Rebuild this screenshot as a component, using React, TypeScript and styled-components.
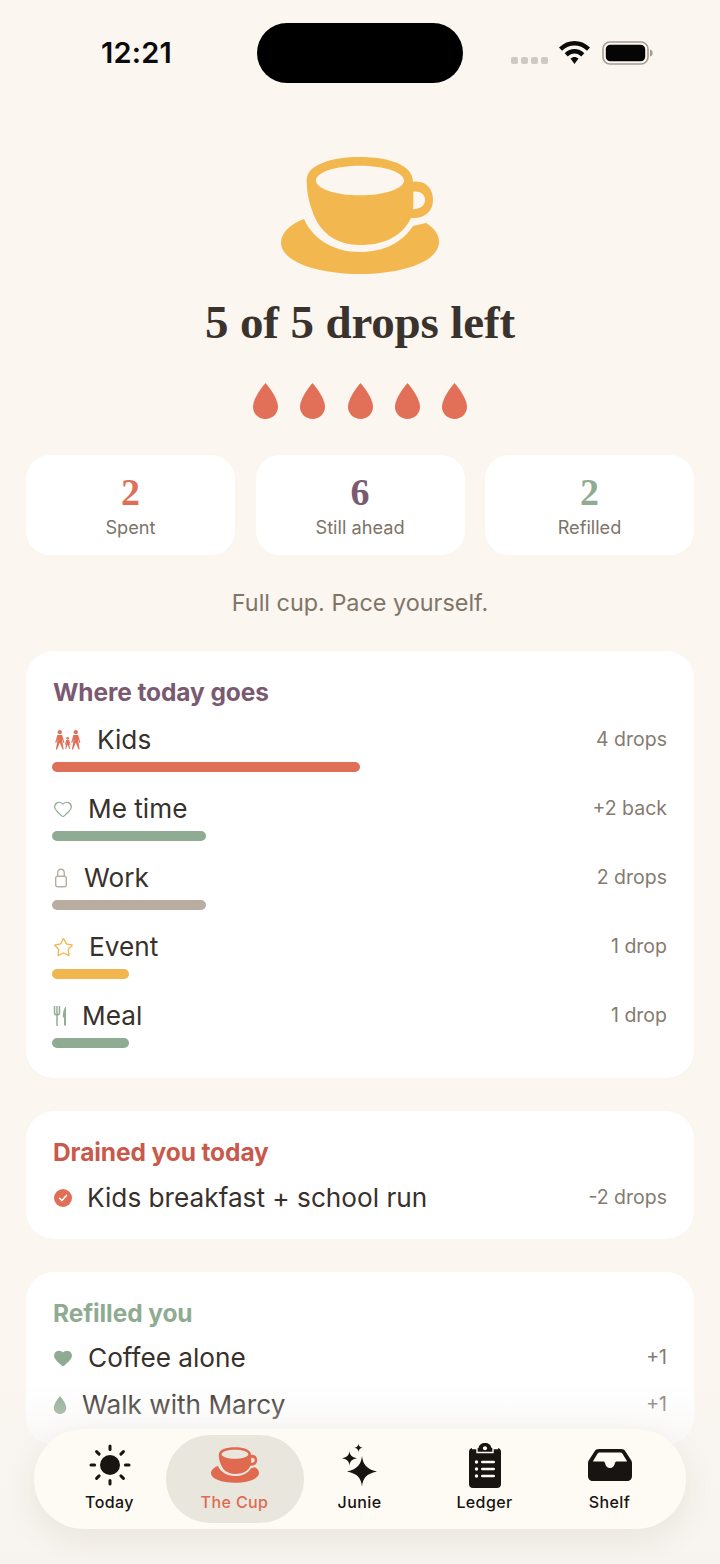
import styled, { createGlobalStyle } from 'styled-components';
import { Heart, Star } from 'lucide-react';

const GlobalStyle = createGlobalStyle`
  html, body {
    margin: 0;
    padding: 0;
    background: #fbf6ef;
    font-family: Inter, "Liberation Sans", sans-serif;
  }
  * { box-sizing: border-box; }
`;

const Page = styled.div`
  position: relative;
  width: 720px;
  height: 1564px;
  overflow: hidden;
  padding: 0 26px;
  background: #fbf6ef;
  color: #38312b;
`;

const StatusBar = styled.div`
  display: flex;
  align-items: center;
  height: 60px;
  margin-top: 23px;
`;

const Clock = styled.div`
  width: 231px;
  padding: 0 0 0 75px;
  font-size: 29px;
  font-weight: 600;
  letter-spacing: 0.2px;
  color: #0b0b0b;
  margin-top: -1px;
`;

const Island = styled.div`
  width: 206px;
  height: 60px;
  border-radius: 30px;
  background: #000;
`;

const StatusIcons = styled.div`
  display: flex;
  align-items: center;
  margin-left: 48px;
  margin-top: -1px;
`;

const SignalDots = styled.div`
  display: flex;
  gap: 3px;
  margin: 15px 11px 0 0;
`;

const SignalDot = styled.span`
  width: 7px;
  height: 7px;
  border-radius: 2px;
  background: #cdc9c3;
`;

const Battery = styled.svg`
  margin-left: 12px;
`;

const Hero = styled.div`
  display: flex;
  flex-direction: column;
  align-items: center;
  margin-top: 74px;
`;

const Title = styled.h1`
  margin: 24px 0 0;
  font-family: "Liberation Serif", serif;
  font-size: 47px;
  line-height: 48px;
  font-weight: 700;
  letter-spacing: -0.15px;
  color: #3a322c;
`;

const DropRow = styled.div`
  display: flex;
  gap: 22.4px;
  margin-top: 37px;
`;

const Stats = styled.div`
  display: grid;
  grid-template-columns: repeat(3, 209px);
  justify-content: space-between;
  margin-top: 36px;
`;

const StatCard = styled.div`
  display: flex;
  flex-direction: column;
  align-items: center;
  height: 100px;
  padding-top: 15px;
  border-radius: 24px;
  background: #fff;
`;

const StatValue = styled.div<{ $color: string }>`
  font-family: "Liberation Serif", serif;
  font-size: 38px;
  line-height: 44px;
  font-weight: 700;
  color: ${({ $color }) => $color};
`;

const StatLabel = styled.div`
  font-size: 18.2px;
  line-height: 24px;
  margin-top: 1px;
  color: #7d7368;
`;

const Tagline = styled.p`
  margin: 34px 0 0;
  text-align: center;
  font-size: 23.4px;
  line-height: 28px;
  color: #7f7568;
`;

const Card = styled.section<{ $gap: number; $bottom: number }>`
  margin-top: 33px;
  padding: 26px 27px ${({ $bottom }) => $bottom}px;
  border-radius: 28px;
  background: #fff;
  display: flex;
  flex-direction: column;
  gap: ${({ $gap }) => $gap}px;

  ${Tagline} + & {
    margin-top: 34px;
  }
`;

const CardTitle = styled.h2<{ $color: string }>`
  margin: 0;
  font-size: 24.5px;
  line-height: 30px;
  font-weight: 700;
  letter-spacing: -0.1px;
  color: ${({ $color }) => $color};
`;

const Rows = styled.div<{ $gap: number }>`
  display: flex;
  flex-direction: column;
  gap: ${({ $gap }) => $gap}px;
`;

const Row = styled.div`
  display: flex;
  align-items: center;
  justify-content: space-between;
  height: 36px;
`;

const RowLabel = styled.div`
  display: flex;
  align-items: center;
  gap: 15px;
  font-size: 26.2px;
  line-height: 34px;
  color: #38312b;
`;

const RowValue = styled.div`
  margin-top: -2px;
  font-size: 19.5px;
  color: #857b70;
`;

const BarRow = styled.div`
  display: flex;
  flex-direction: column;
  gap: 4px;
`;

const Bar = styled.div<{ $color: string }>`
  height: 10px;
  margin-left: -1px;
  border-radius: 5px;
  background: ${({ $color }) => $color};
`;

const IconSlot = styled.span`
  display: flex;
  align-items: center;
`;

const Fade = styled.div`
  position: absolute;
  left: 0;
  right: 0;
  bottom: 0;
  height: 180px;
  background: linear-gradient(to bottom, rgba(248, 245, 242, 0), rgba(246, 243, 241, 0.42) 24%, rgba(247, 243, 238, 0.85) 100%);
  pointer-events: none;
`;

const TabBar = styled.nav`
  position: absolute;
  left: 34px;
  right: 34px;
  bottom: 35px;
  height: 100px;
  padding: 0 13px;
  display: flex;
  align-items: center;
  border-radius: 50px;
  background: #fefbf4;
  box-shadow: 0 10px 34px rgba(70, 50, 30, 0.08);
`;

const Tab = styled.div<{ $active?: boolean }>`
  flex: ${({ $active }) => ($active ? '0 0 138px' : '0 0 125px')};
  margin: ${({ $active }) => ($active ? '0 -6.5px' : '0')};
  height: 88px;
  display: flex;
  flex-direction: column;
  align-items: center;
  padding-top: 7px;
  border-radius: 44px;
  background: ${({ $active }) => ($active ? '#e9e6dd' : 'transparent')};
  color: ${({ $active }) => ($active ? '#df6a4f' : '#171411')};
`;

const TabIcon = styled.div`
  height: 46px;
  display: flex;
  align-items: center;
  justify-content: center;
`;

const TabLabel = styled.div`
  margin-top: 4px;
  font-size: 16px;
  line-height: 20px;
  font-weight: 500;
  letter-spacing: 0.4px;
`;

const CUP_BODY =
  'M25.7 23C25.7 8 50 0 79 0C108 0 132 8 132 24.7C146 23 152 33 152 43C152 54 144 62 130 61C121 80 102 88 79 88C56 88 38 76 31 53C27 42 25.7 33 25.7 23ZM79 8.7C54.7 8.7 35 15.3 35 23.5C35 31.7 54.7 38.3 79 38.3C103.3 38.3 123 31.7 123 23.5C123 15.3 103.3 8.7 79 8.7ZM132.3 34.7C132.5 40 132.5 46 132 52.3C139 52 144 49 144 43C144 37 139 34 132.3 34.7Z';
const CUP_SAUCER =
  'M23 62C9 67 0 76 0 86C0 104 35 117 79 117C123 117 158 104 158 85C158 77 153 71 145 66L132 69C121 86 102 95 79 95C52 95 32 82 23 62Z';
const DROP = 'M12.5 0C15 3 25 15 25 24C25 31 19 36 12.5 36C6 36 0 31 0 24C0 15 10 3 12.5 0Z';

function CupIcon({ width, height, color }: { width: number; height: number; color: string }) {
  return (
    <svg width={width} height={height} viewBox="0 0 158 117" fill={color}>
      <path d={CUP_BODY} fillRule="evenodd" />
      <path d={CUP_SAUCER} />
    </svg>
  );
}

function DropIcon({ width, height, color }: { width: number; height: number; color: string }) {
  return (
    <svg width={width} height={height} viewBox="0 0 25 36" fill={color}>
      <path d={DROP} />
    </svg>
  );
}

function KidsIcon() {
  const person = (x: number, y: number, s: number) => (
    <g transform={`translate(${x} ${y}) scale(${s})`}>
      <circle cx="0" cy="2.2" r="2.1" />
      <path d="M-2.4 5H2.4L4.6 12.5L3.6 13L2 8.5L3.9 19.5H2.7L0 12.5L-2.7 19.5H-3.9L-2 8.5L-3.6 13L-4.6 12.5Z" />
    </g>
  );
  return (
    <svg width="29" height="20" viewBox="0 0 29 20" fill="#e06f58">
      {person(6.8, 0, 1)}
      {person(14.7, 7, 0.62)}
      {person(22.8, 0, 1)}
    </svg>
  );
}

function LockIcon() {
  return (
    <svg width="16" height="20" viewBox="0 0 16 20" fill="none" stroke="#b8ada0" strokeWidth="1.4">
      <rect x="2.7" y="8.2" width="10.6" height="10.6" rx="2" />
      <path d="M4.7 8V5.2C4.7 3 6 1.2 8 1.2C10 1.2 11.3 3 11.3 5.2V8" />
    </svg>
  );
}

function MealIcon() {
  return (
    <svg width="14" height="20" viewBox="0 0 14 20" fill="none">
      <path d="M1.5 0.5V6.5C1.5 8 2.4 9 4 9C5.6 9 6.5 8 6.5 6.5V0.5M4 0.5V19.5" stroke="#93ad96" strokeWidth="1.5" strokeLinecap="round" />
      <path d="M13 0.5C10.5 2.5 9.8 7 9.8 11.5H11V19.5H13Z" fill="#93ad96" />
    </svg>
  );
}

function CheckIcon() {
  return (
    <svg width="19" height="18" viewBox="-1 0 19 18">
      <circle cx="9" cy="9" r="9" fill="#e06f58" />
      <path d="M5.6 9.3L8 11.6L12.4 6.4" fill="none" stroke="#fff" strokeWidth="1.5" strokeLinecap="round" strokeLinejoin="round" />
    </svg>
  );
}

function SunIcon() {
  const rays = [0, 45, 90, 135, 180, 225, 270, 315];
  return (
    <svg width="42" height="42" viewBox="0 0 42 42" fill="currentColor">
      <circle cx="21" cy="21" r="10" />
      {rays.map((angle) => (
        <rect key={angle} x="19.5" y="0.5" width="3" height="6.6" rx="1.5" transform={`rotate(${angle} 21 21)`} />
      ))}
    </svg>
  );
}

function SparklesIcon() {
  return (
    <svg width="36" height="44" viewBox="0 0 36 44" fill="currentColor">
      <path d="M20 13C21 21 24 26 35 28.5C24 31 21 35 20 43.5C19 35 16 31 5 28.5C16 26 19 21 20 13Z" />
      <path d="M7.5 8C8 12 9.5 14 15 15.2C9.5 16.4 8 18.4 7.5 22.4C7 18.4 5.5 16.4 0 15.2C5.5 14 7 12 7.5 8Z" />
      <path d="M16.5 0.5C16.8 3 17.6 4.2 20.6 4.8C17.6 5.4 16.8 6.6 16.5 9.2C16.2 6.6 15.4 5.4 12.4 4.8C15.4 4.2 16.2 3 16.5 0.5Z" />
    </svg>
  );
}

function ClipboardIcon() {
  return (
    <svg width="32" height="45" viewBox="0 0 32 45">
      <path
        fill="currentColor"
        fillRule="evenodd"
        d="M4 5H9.5C10 2 12.5 0 16 0C19.5 0 22 2 22.5 5H28C30.5 5 32 6.5 32 9V41C32 43.5 30.5 45 28 45H4C1.5 45 0 43.5 0 41V9C0 6.5 1.5 5 4 5ZM16 3.2C14.8 3.2 13.9 4.1 13.9 5.2C13.9 6.3 14.8 7.2 16 7.2C17.2 7.2 18.1 6.3 18.1 5.2C18.1 4.1 17.2 3.2 16 3.2Z"
      />
      <path d="M3 5.5H8V9.5H24V5.5H29" fill="none" stroke="#fefbf4" strokeWidth="1.4" />
      <g fill="#fefbf4">
        <circle cx="7.5" cy="19" r="1.7" />
        <circle cx="7.5" cy="26" r="1.7" />
        <circle cx="7.5" cy="33" r="1.7" />
        <rect x="12" y="17.8" width="14" height="2.4" rx="1.2" />
        <rect x="12" y="24.8" width="14" height="2.4" rx="1.2" />
        <rect x="12" y="31.8" width="14" height="2.4" rx="1.2" />
      </g>
    </svg>
  );
}

function TrayIcon() {
  return (
    <svg width="44" height="32" viewBox="0 0 44 32" fill="currentColor">
      <path
        fillRule="evenodd"
        d="M11 0H33C35 0 36.5 0.8 37.5 2.4L43 11C43.7 12 44 13 44 14.5V27C44 30 42 32 39 32H5C2 32 0 30 0 27V14.5C0 13 0.3 12 1 11L6.5 2.4C7.5 0.8 9 0 11 0ZM11.5 3.6C10.6 3.6 10 4 9.5 4.7L4.8 12.4H15C16.2 12.4 16.8 13 17.1 14.2C17.7 17 19.5 19 22 19C24.5 19 26.3 17 26.9 14.2C27.2 13 27.8 12.4 29 12.4H39.2L34.5 4.7C34 4 33.4 3.6 32.5 3.6Z"
      />
    </svg>
  );
}

const stats = [
  { value: '2', label: 'Spent', color: '#e06f58' },
  { value: '6', label: 'Still ahead', color: '#7a5a70' },
  { value: '2', label: 'Refilled', color: '#8fab92' },
];

const plan = [
  { label: 'Kids', value: '4 drops', units: 4, color: '#e06f58', icon: <KidsIcon /> },
  { label: 'Me time', value: '+2 back', units: 2, color: '#8fab92', icon: <Heart size={20} color="#8fab92" strokeWidth={1.4} /> },
  { label: 'Work', value: '2 drops', units: 2, color: '#b8ada0', icon: <LockIcon /> },
  { label: 'Event', value: '1 drop', units: 1, color: '#f2b64f', icon: <Star size={21} color="#f2b64f" strokeWidth={1.5} /> },
  { label: 'Meal', value: '1 drop', units: 1, color: '#8fab92', icon: <MealIcon /> },
];

const tabs = [
  { label: 'Today', icon: <SunIcon /> },
  { label: 'The Cup', active: true, icon: <CupIcon width={48} height={36} color="#df6a4f" /> },
  { label: 'Junie', icon: <SparklesIcon /> },
  { label: 'Ledger', icon: <ClipboardIcon /> },
  { label: 'Shelf', icon: <TrayIcon /> },
];

export default function App() {
  return (
    <Page>
      <GlobalStyle />
      <StatusBar>
        <Clock>12:21</Clock>
        <Island />
        <StatusIcons>
          <SignalDots>
            {[0, 1, 2, 3].map((dot) => (
              <SignalDot key={dot} />
            ))}
          </SignalDots>
          <svg width="31" height="23" viewBox="0 0 31 23" fill="#0b0b0b">
            <path d="M15.5 0C21 0 26.5 2.2 31 6.4L28 9.8C24.5 6.4 20 4.6 15.5 4.6C11 4.6 6.5 6.4 3 9.8L0 6.4C4.5 2.2 10 0 15.5 0Z" />
            <path d="M15.5 8C19 8 22.4 9.4 25.3 12.2L22.2 15.5C20.3 13.6 18 12.6 15.5 12.6C13 12.6 10.7 13.6 8.8 15.5L5.7 12.2C8.6 9.4 12 8 15.5 8Z" />
            <path d="M15.5 16C17 16 18.3 16.5 19.5 17.6L15.5 23L11.5 17.6C12.7 16.5 14 16 15.5 16Z" />
          </svg>
          <Battery width="51" height="24" viewBox="0 0 51 24">
            <rect x="1" y="1" width="45" height="22" rx="7" fill="none" stroke="#a39d94" strokeWidth="1.6" />
            <rect x="3.8" y="3.8" width="39.4" height="16.4" rx="4.5" fill="#050505" />
            <path d="M48 8.5C50 9 50.6 10.4 50.6 12C50.6 13.6 50 15 48 15.5Z" fill="#a39d94" />
          </Battery>
        </StatusIcons>
      </StatusBar>

      <Hero>
        <CupIcon width={158} height={117} color="#f2b84f" />
        <Title>5 of 5 drops left</Title>
        <DropRow>
          {[0, 1, 2, 3, 4].map((drop) => (
            <DropIcon key={drop} width={25} height={36} color="#e27059" />
          ))}
        </DropRow>
      </Hero>

      <Stats>
        {stats.map((stat) => (
          <StatCard key={stat.label}>
            <StatValue $color={stat.color}>{stat.value}</StatValue>
            <StatLabel>{stat.label}</StatLabel>
          </StatCard>
        ))}
      </Stats>

      <Tagline>Full cup. Pace yourself.</Tagline>

      <Card $gap={15} $bottom={30}>
        <CardTitle $color="#7a5a70">Where today goes</CardTitle>
        <Rows $gap={19}>
          {plan.map((item) => (
            <BarRow key={item.label}>
              <Row>
                <RowLabel>
                  <IconSlot>{item.icon}</IconSlot>
                  {item.label}
                </RowLabel>
                <RowValue>{item.value}</RowValue>
              </Row>
              <Bar $color={item.color} style={{ width: item.units * 77 }} />
            </BarRow>
          ))}
        </Rows>
      </Card>

      <Card $gap={13} $bottom={23}>
        <CardTitle $color="#c9594a">Drained you today</CardTitle>
        <Row>
          <RowLabel>
            <IconSlot>
              <CheckIcon />
            </IconSlot>
            Kids breakfast + school run
          </RowLabel>
          <RowValue>-2 drops</RowValue>
        </Row>
      </Card>

      <Card $gap={12} $bottom={22}>
        <CardTitle $color="#8fab92">Refilled you</CardTitle>
        <Rows $gap={11}>
          <Row>
            <RowLabel>
              <IconSlot>
                <Heart size={20} color="#8fab92" fill="#8fab92" strokeWidth={1.4} />
              </IconSlot>
              Coffee alone
            </RowLabel>
            <RowValue>+1</RowValue>
          </Row>
          <Row>
            <RowLabel>
              <IconSlot>
                <DropIcon width={14} height={18} color="#8fab92" />
              </IconSlot>
              Walk with Marcy
            </RowLabel>
            <RowValue>+1</RowValue>
          </Row>
        </Rows>
      </Card>

      <Fade />
      <TabBar>
        {tabs.map((tab) => (
          <Tab key={tab.label} $active={tab.active}>
            <TabIcon>{tab.icon}</TabIcon>
            <TabLabel>{tab.label}</TabLabel>
          </Tab>
        ))}
      </TabBar>
    </Page>
  );
}
